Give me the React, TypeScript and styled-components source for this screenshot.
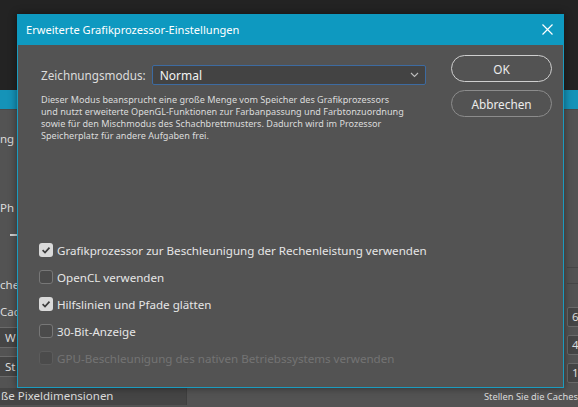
import * as React from 'react'
import styled, { createGlobalStyle, css } from 'styled-components'

const GlobalStyle = createGlobalStyle`
    html, body {
        margin: 0;
        padding: 0;
        background: #232323;
    }
    body {
        font-family: 'Noto Sans', 'Open Sans', sans-serif;
        color: #dcdcdc;
    }
`

const options = [
    { label: 'Grafikprozessor zur Beschleunigung der Rechenleistung verwenden', checked: true },
    { label: 'OpenCL verwenden', checked: false },
    { label: 'Hilfslinien und Pfade glätten', checked: true },
    { label: '30-Bit-Anzeige', checked: false },
    { label: 'GPU-Beschleunigung des nativen Betriebssystems verwenden', checked: false, disabled: true },
]

const Check = () => (
    <svg width="10" height="10" viewBox="0 0 10 10">
        <path d="M1.6 5.2 L4 7.5 L8.5 2.6" fill="none" stroke="#3d3d3d" strokeWidth="1.7" />
    </svg>
)

const Chevron = () => (
    <svg width="9" height="6" viewBox="0 0 9 6">
        <path d="M1 1 L4.5 4.5 L8 1" fill="none" stroke="#bdbdbd" strokeWidth="1.1" />
    </svg>
)

const Close = () => (
    <svg width="11" height="11" viewBox="0 0 11 11">
        <path d="M0.5 0.5 L10.5 10.5 M10.5 0.5 L0.5 10.5" stroke="#ffffff" strokeWidth="1.2" />
    </svg>
)

export default function App() {
    return (
        <>
            <GlobalStyle />
            <Screen>
                <Behind>
                    <TopDark />
                    <TealBand />
                    <Panel>
                        <PanelMain>
                            <LeftCol>
                                <BgText $top={21}>ng</BgText>
                                <BgText $top={53}>Ph</BgText>
                                <Dash />
                                <BgText $top={41}>che</BgText>
                                <BgText $top={11}>Cach</BgText>
                                <BgField $top={7}>W</BgField>
                                <BgField $top={8}>St</BgField>
                            </LeftCol>
                            <RightCol>
                                <RuleLine $top={157} />
                                <RuleLine $top={15} />
                                <NumBox $top={23}>6</NumBox>
                                <NumBox $top={8}>4</NumBox>
                                <NumBox $top={8}>1</NumBox>
                            </RightCol>
                        </PanelMain>
                        <PanelBottom>
                            <BottomField>ße Pixeldimensionen</BottomField>
                            <BottomHint>Stellen Sie die Caches</BottomHint>
                        </PanelBottom>
                    </Panel>
                </Behind>

                <Dialog>
                    <TitleBar>
                        <Title>Erweiterte Grafikprozessor-Einstellungen</Title>
                        <CloseButton>
                            <Close />
                        </CloseButton>
                    </TitleBar>
                    <Body>
                        <Main>
                            <ModeRow>
                                <ModeLabel>Zeichnungsmodus:</ModeLabel>
                                <Select>
                                    <span>Normal</span>
                                    <Chevron />
                                </Select>
                            </ModeRow>
                            <Description>
                                Dieser Modus beansprucht eine große Menge vom Speicher des Grafikprozessors
                                <br />
                                und nutzt erweiterte OpenGL-Funktionen zur Farbanpassung und Farbtonzuordnung
                                <br />
                                sowie für den Mischmodus des Schachbrettmusters. Dadurch wird im Prozessor
                                <br />
                                Speicherplatz für andere Aufgaben frei.
                            </Description>
                            <Options>
                                {options.map((o) => (
                                    <OptionRow key={o.label} $disabled={!!o.disabled}>
                                        <Box $checked={o.checked} $disabled={!!o.disabled}>
                                            {o.checked && <Check />}
                                        </Box>
                                        <span>{o.label}</span>
                                    </OptionRow>
                                ))}
                            </Options>
                        </Main>
                        <Buttons>
                            <Button $primary>OK</Button>
                            <Button>Abbrechen</Button>
                        </Buttons>
                    </Body>
                </Dialog>
            </Screen>
        </>
    )
}

const Screen = styled.div`
    position: relative;
    width: 578px;
    height: 407px;
    overflow: hidden;
`

const Behind = styled.div`
    display: flex;
    flex-direction: column;
    height: 100%;
`

const TopDark = styled.div`
    height: 90px;
    background: #232323;
`

const TealBand = styled.div`
    height: 19px;
    background: #1593b8;
`

const Panel = styled.div`
    flex: 1;
    display: flex;
    flex-direction: column;
    background: #535353;
    border-top: 1px solid #4a4a4a;
`

const PanelMain = styled.div`
    flex: 1;
    display: flex;
    justify-content: space-between;
`

const LeftCol = styled.div`
    width: 40px;
    display: flex;
    flex-direction: column;
    align-items: flex-start;
`

const BgText = styled.div<{ $top: number }>`
    margin-top: ${({ $top }) => $top}px;
    font-size: 11.5px;
    line-height: 16px;
    white-space: nowrap;
    color: #dcdcdc;
`

const Dash = styled.div`
    margin: 18px 0 0 10px;
    width: 10px;
    height: 2px;
    background: #cfcfcf;
`

const BgField = styled.div<{ $top: number }>`
    margin-top: ${({ $top }) => $top}px;
    margin-left: -4px;
    width: 36px;
    height: 19px;
    padding-left: 8px;
    border: 1px solid #6a6a6a;
    border-radius: 2px;
    background: #454545;
    font-size: 11.5px;
    line-height: 19px;
    white-space: nowrap;
`

const RightCol = styled.div`
    width: 11px;
    display: flex;
    flex-direction: column;
`

const RuleLine = styled.div<{ $top: number }>`
    margin-top: ${({ $top }) => $top}px;
    height: 1px;
    background: #464646;
`

const NumBox = styled.div<{ $top: number }>`
    margin-top: ${({ $top }) => $top}px;
    width: 30px;
    height: 18px;
    padding-left: 4px;
    border: 1px solid #6a6a6a;
    border-radius: 2px;
    background: #454545;
    font-size: 11.5px;
    line-height: 18px;
`

const PanelBottom = styled.div`
    height: 19px;
    display: flex;
    align-items: flex-start;
    justify-content: space-between;
`

const BottomField = styled.div`
    width: 185px;
    height: 17px;
    padding-left: 1px;
    background: #454545;
    border-right: 1px solid #3f3f3f;
    font-size: 11.5px;
    line-height: 16px;
    white-space: nowrap;
`

const BottomHint = styled.div`
    width: 94px;
    font-size: 9.3px;
    line-height: 12px;
    white-space: nowrap;
    margin-top: 3px;
`

const Dialog = styled.div`
    position: absolute;
    left: 17px;
    top: 14px;
    width: 545px;
    height: 373px;
    display: flex;
    flex-direction: column;
    background: #535353;
    border: 1px solid #1b9bbf;
    border-top: none;
    box-shadow: 0 0 8px rgba(0, 0, 0, 0.45);
`

const TitleBar = styled.div`
    height: 31px;
    display: flex;
    align-items: center;
    justify-content: space-between;
    padding: 0 10px 0 9px;
    background: #0e99c0;
    margin: 0 -1px;
`

const Title = styled.div`
    font-size: 11.1px;
    color: #ffffff;
`

const CloseButton = styled.div`
    display: flex;
    align-items: center;
    margin-right: 1px;
`

const Body = styled.div`
    flex: 1;
    display: flex;
`

const Main = styled.div`
    flex: 1;
    min-width: 0;
    display: flex;
    flex-direction: column;
    padding: 20px 0 0 21px;
`

const ModeRow = styled.div`
    display: flex;
    align-items: center;
    gap: 6px;
    padding-left: 2px;
`

const ModeLabel = styled.div`
    font-size: 11.7px;
    color: #dcdcdc;
`

const Select = styled.div`
    width: 274px;
    height: 20px;
    box-sizing: border-box;
    display: flex;
    align-items: center;
    justify-content: space-between;
    padding: 0 6px 0 7px;
    background: #434343;
    border: 1px solid #3d6ba1;
    border-radius: 2px;
    font-size: 12px;
    color: #f2f2f2;
`

const Description = styled.div`
    margin-top: 9px;
    padding-left: 2px;
    font-size: 9.1px;
    line-height: 12px;
    white-space: nowrap;
    color: #dcdcdc;
`

const Options = styled.div`
    margin-top: auto;
    padding-bottom: 20px;
    display: flex;
    flex-direction: column;
    gap: 9px;
`

const OptionRow = styled.div<{ $disabled: boolean }>`
    height: 18px;
    display: flex;
    align-items: center;
    gap: 4px;
    font-size: 11.6px;
    color: ${({ $disabled }) => ($disabled ? '#737373' : '#e6e6e6')};
`

const Box = styled.div<{ $checked: boolean; $disabled: boolean }>`
    width: 14px;
    height: 14px;
    box-sizing: border-box;
    display: flex;
    align-items: center;
    justify-content: center;
    border-radius: 3px;
    ${({ $checked, $disabled }) =>
        $checked
            ? css`
                  background: #dadada;
              `
            : css`
                  background: #4b4b4b;
                  border: 1px solid ${$disabled ? '#5c5c5c' : '#777777'};
              `}
`

const Buttons = styled.div`
    width: 101px;
    flex-shrink: 0;
    margin: 10px 11px 0 0;
    display: flex;
    flex-direction: column;
    gap: 8px;
`

const Button = styled.div<{ $primary?: boolean }>`
    height: 27px;
    box-sizing: border-box;
    display: flex;
    align-items: center;
    justify-content: center;
    border-radius: 14px;
    border: 1px solid ${({ $primary }) => ($primary ? '#cfcfcf' : '#8c8c8c')};
    font-size: 11.8px;
    color: #ececec;
`
